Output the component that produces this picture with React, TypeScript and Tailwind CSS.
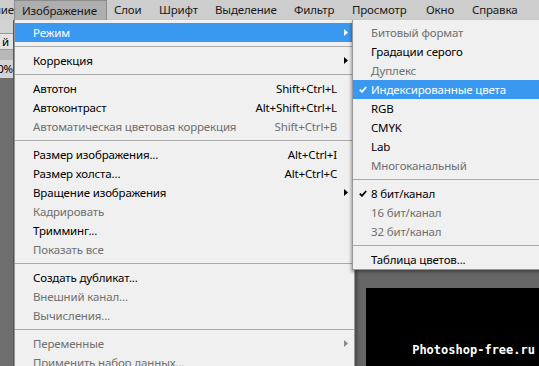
import React from "react";

type RowProps = {
  label: string;
  shortcut?: string;
  disabled?: boolean;
  arrow?: boolean;
  highlight?: boolean;
};

function Tri({ color }: { color: string }) {
  return (
    <svg width="4" height="7" viewBox="0 0 4 7">
      <polygon points="0,0 4,3.5 0,7" fill={color} />
    </svg>
  );
}

function Check({ color }: { color: string }) {
  return (
    <svg width="8" height="7" viewBox="0 0 8 7">
      <path d="M0.8 3.6 L3 5.8 L7.2 1" stroke={color} strokeWidth="1.8" fill="none" />
    </svg>
  );
}

function Row({ label, shortcut, disabled, arrow, highlight }: RowProps) {
  const color = highlight ? "text-white" : disabled ? "text-[#6f6f6f]" : "text-black";
  const triColor = highlight ? "#ffffff" : disabled ? "#8a8a8a" : "#000000";
  return (
    <div className={`flex items-center h-[19px] ${highlight ? "bg-[#3b98f0]" : ""} ${color}`}>
      <span className="pl-[18px] whitespace-nowrap">{label}</span>
      <span className="ml-auto whitespace-nowrap">{shortcut}</span>
      <span className="w-[17px] flex justify-center">{arrow && <Tri color={triColor} />}</span>
    </div>
  );
}

function SubRow({ label, disabled, checked, highlight }: { label: string; disabled?: boolean; checked?: boolean; highlight?: boolean }) {
  const color = highlight ? "text-white" : disabled ? "text-[#6f6f6f]" : "text-black";
  return (
    <div className={`flex items-center h-[19px] ${highlight ? "bg-[#3b98f0]" : ""} ${color}`}>
      <span className="w-[18px] flex justify-center pl-[2px]">{checked && <Check color={highlight ? "#ffffff" : "#000000"} />}</span>
      <span className="whitespace-nowrap">{label}</span>
    </div>
  );
}

function Sep() {
  return (
    <div className="h-[9px] flex items-center">
      <div className="h-px w-full bg-[#a9a9a9]" />
    </div>
  );
}

const bar = ["Слои", "Шрифт", "Выделение", "Фильтр", "Просмотр", "Окно", "Справка"];
const barW = ["w-[45px]", "w-[56px]", "w-[79px]", "w-[58px]", "w-[74px]", "w-[46px]", "w-[71px]"];

export default function App() {
  return (
    <div className="relative w-[539px] h-[366px] overflow-hidden bg-[#666666] font-[family-name:'Noto_Sans',sans-serif] text-[11.5px] tracking-[-0.15px] leading-none">
      {/* Menu bar */}
      <div className="flex h-[20px] bg-[#cdcdcd] text-[#1a1a1a] items-stretch">
        <div className="w-[14px] overflow-hidden flex justify-end items-center">
          <span className="whitespace-nowrap">ование</span>
        </div>
        <div className="w-[93px] flex items-center pl-[7px] bg-[#aeaeae] border border-b-0 border-[#8c8c8c]">Изображение</div>
        {bar.map((t, i) => (
          <div key={t} className={`${barW[i]} flex items-center pl-[7px]`}>{t}</div>
        ))}
      </div>

      {/* Workspace */}
      <div className="flex h-[346px]">
        <div className="w-[14px] flex flex-col bg-[#6e6e6e] border-r border-[#575757]">
          <div className="h-[13px] bg-[#d2d2d2]" />
          <div className="h-[17px] bg-[#e4e4e4] border-y border-[#9a9a9a] flex items-center text-black overflow-hidden pl-[2px]">й</div>
          <div className="h-[10px] bg-[#b8b8b8]" />
          <div className="h-[18px] bg-[#d4d4d4] flex items-center text-black overflow-hidden justify-end">0%</div>
          <div className="flex-1" />
        </div>
        <div className="flex-1 relative pl-[352px] pt-[268px]">
          <div className="w-full h-full bg-black" />
          <div className="absolute right-[4px] bottom-[10px] text-white font-bold font-[family-name:'DejaVu_Sans_Mono',monospace] text-[12px] tracking-normal">Photoshop-free.ru</div>
        </div>
      </div>

      {/* Main dropdown menu */}
      <div className="absolute left-[14px] top-[20px] w-[341px] h-[346px] bg-[#f0f0f0] border-l border-r border-[#979797] pt-[3px] shadow-[2px_2px_3px_rgba(0,0,0,0.3)]">
        <Row label="Режим" arrow highlight />
        <Sep />
        <Row label="Коррекция" arrow />
        <Sep />
        <Row label="Автотон" shortcut="Shift+Ctrl+L" />
        <Row label="Автоконтраст" shortcut="Alt+Shift+Ctrl+L" />
        <Row label="Автоматическая цветовая коррекция" shortcut="Shift+Ctrl+B" disabled />
        <Sep />
        <Row label="Размер изображения..." shortcut="Alt+Ctrl+I" />
        <Row label="Размер холста..." shortcut="Alt+Ctrl+C" />
        <Row label="Вращение изображения" arrow />
        <Row label="Кадрировать" disabled />
        <Row label="Тримминг..." />
        <Row label="Показать все" disabled />
        <Sep />
        <Row label="Создать дубликат..." />
        <Row label="Внешний канал..." disabled />
        <Row label="Вычисления..." disabled />
        <Sep />
        <Row label="Переменные" arrow disabled />
        <Row label="Применить набор данных..." disabled />
      </div>

      {/* Submenu */}
      <div className="absolute left-[352px] top-[20px] w-[200px] h-[250px] bg-[#f0f0f0] border border-t-0 border-[#979797] pt-[3px] shadow-[-1px_2px_3px_rgba(0,0,0,0.35)]">
        <SubRow label="Битовый формат" disabled />
        <SubRow label="Градации серого" />
        <SubRow label="Дуплекс" disabled />
        <SubRow label="Индексированные цвета" checked highlight />
        <SubRow label="RGB" />
        <SubRow label="CMYK" />
        <SubRow label="Lab" />
        <SubRow label="Многоканальный" disabled />
        <Sep />
        <SubRow label="8 бит/канал" checked />
        <SubRow label="16 бит/канал" disabled />
        <SubRow label="32 бит/канал" disabled />
        <Sep />
        <SubRow label="Таблица цветов..." />
      </div>
    </div>
  );
}
